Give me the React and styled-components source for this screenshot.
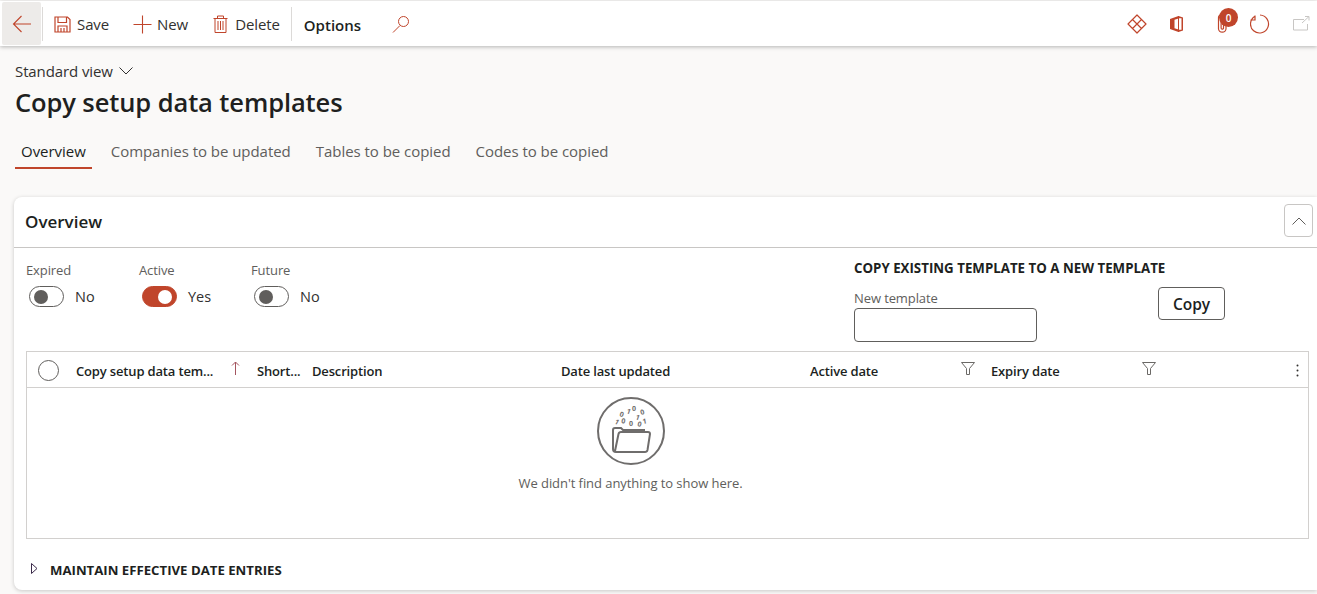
import React from 'react'
import styled, { createGlobalStyle } from 'styled-components'

const GlobalStyle = createGlobalStyle`
  html, body { margin: 0; padding: 0; background: #faf9f8; overflow: hidden; }
  body { font-family: "Open Sans", "Noto Sans", sans-serif; color: #201f1e; }
`
const RED = '#c0452b'

const Page = styled.div`
  width: 1317px;
  height: 594px;
  display: flex;
  flex-direction: column;
`
const Toolbar = styled.div`
  height: 45px;
  margin-top: 1px;
  background: #fff;
  box-shadow: 0 1px 4px rgba(0, 0, 0, 0.28);
  display: flex;
  align-items: center;
  padding-left: 2px;
  flex-shrink: 0;
`
const BackButton = styled.div`
  width: 39px;
  height: 43px;
  background: #edebe9;
  border-radius: 2px;
  display: flex;
  align-items: center;
  justify-content: center;
`
const Divider = styled.div`
  width: 1px;
  height: 34px;
  background: #dcdad8;
  margin: ${p => p.$margin};
`
const ToolButton = styled.div`
  display: flex;
  align-items: center;
  gap: ${p => p.$gap}px;
  margin-left: ${p => p.$left}px;
  font-size: 15px;
  letter-spacing: -0.1px;
  color: #323130;
  padding-top: 1px;
`
const OptionsLabel = styled.div`
  font-size: 15px;
  font-weight: 600;
  margin-left: 12px;
  padding-top: 2px;
  color: #201f1e;
`
const RightIcons = styled.div`
  margin-left: auto;
  display: flex;
  align-items: center;
  height: 100%;
`
const IconSlot = styled.div`
  position: relative;
  display: flex;
  margin-left: ${p => p.$left}px;
`
const Badge = styled.span`
  position: absolute;
  top: -5px;
  left: 3px;
  width: 19px;
  height: 19px;
  border-radius: 50%;
  background: ${RED};
  color: #fff;
  font-size: 10px;
  font-weight: 600;
  display: flex;
  align-items: center;
  justify-content: center;
`
const Header = styled.div`
  padding: 15px 0 0 15px;
`
const ViewSelect = styled.div`
  display: flex;
  align-items: center;
  gap: 6px;
  font-size: 15px;
  letter-spacing: -0.1px;
  line-height: 20px;
  color: #323130;
`
const Title = styled.h1`
  margin: 4px 0 0;
  font-size: 25.5px;
  line-height: 34px;
  font-weight: 600;
  letter-spacing: -0.1px;
  color: #201f1e;
`
const Tabs = styled.div`
  display: flex;
  margin-top: 16px;
  gap: 13px;
`
const Tab = styled.div`
  height: 34px;
  padding: 0 6px;
  display: flex;
  align-items: center;
  font-size: 15px;
  letter-spacing: -0.04px;
  color: ${p => (p.$active ? '#201f1e' : '#605e5c')};
  border-bottom: 2px solid ${p => (p.$active ? RED : 'transparent')};
  box-sizing: border-box;
`
const Card = styled.section`
  margin: 28px 0 0 14px;
  height: 393px;
  background: #fff;
  border-radius: 8px 0 0 8px;
  box-shadow: 0 1px 4px rgba(0, 0, 0, 0.2);
  display: flex;
  flex-direction: column;
`
const CardHeader = styled.div`
  height: 51px;
  box-sizing: border-box;
  border-bottom: 1px solid #c8c6c4;
  display: flex;
  align-items: center;
  justify-content: space-between;
  padding: 0 4px 0 11px;
  flex-shrink: 0;
`
const CardTitle = styled.h2`
  margin: 0 0 2px;
  font-size: 17px;
  font-weight: 600;
  color: #201f1e;
`
const CollapseButton = styled.div`
  width: 29px;
  height: 33px;
  box-sizing: border-box;
  margin-bottom: 3px;
  border: 1px solid #c8c6c4;
  border-radius: 4px;
  display: flex;
  align-items: center;
  justify-content: center;
`
const FormRow = styled.div`
  height: 103px;
  flex-shrink: 0;
  padding-left: 12px;
  display: flex;
`
const ToggleGroup = styled.div`
  width: 828px;
  display: flex;
  flex-shrink: 0;
  padding-top: 13px;
  box-sizing: border-box;
`
const ToggleField = styled.div`
  width: ${p => p.$width}px;
`
const FieldLabel = styled.div`
  font-size: 13px;
  letter-spacing: -0.1px;
  line-height: 18px;
  color: #605e5c;
`
const ToggleLine = styled.div`
  display: flex;
  align-items: center;
  gap: 11px;
  margin: 7px 0 0 3px;
  font-size: 14.5px;
  color: #323130;
`
const ToggleTrack = styled.div`
  width: 35px;
  height: 21px;
  box-sizing: border-box;
  border-radius: 11px;
  border: 1px solid ${p => (p.$on ? RED : '#605e5c')};
  background: ${p => (p.$on ? RED : '#fff')};
  display: flex;
  align-items: center;
  justify-content: ${p => (p.$on ? 'flex-end' : 'flex-start')};
  padding: 0 4px;
`
const ToggleThumb = styled.div`
  width: 14px;
  height: 14px;
  border-radius: 50%;
  background: ${p => (p.$on ? '#fff' : '#605e5c')};
`
const CopySection = styled.div`
  padding-top: 11px;
`
const CopyHeading = styled.div`
  font-size: 13.3px;
  font-weight: 700;
  line-height: 18px;
  color: #201f1e;
`
const CopyFields = styled.div`
  display: flex;
  align-items: flex-start;
  margin-top: 12px;
`
const TextInput = styled.div`
  width: 183px;
  height: 34px;
  box-sizing: border-box;
  margin-top: 1px;
  border: 1px solid #605e5c;
  border-radius: 4px;
`
const CopyButton = styled.div`
  width: 67px;
  height: 33px;
  box-sizing: border-box;
  margin: -2px 0 0 121px;
  padding-top: 1px;
  border: 1px solid #605e5c;
  border-radius: 4px;
  display: flex;
  align-items: center;
  justify-content: center;
  font-size: 15.5px;
  font-weight: 600;
`
const Grid = styled.div`
  margin: 0 8px 0 12px;
  height: 188px;
  flex-shrink: 0;
  box-sizing: border-box;
  border: 1px solid #d2d0ce;
  display: flex;
  flex-direction: column;
`
const GridHead = styled.div`
  height: 36px;
  flex-shrink: 0;
  box-sizing: border-box;
  padding-top: 2px;
  border-bottom: 1px solid #d2d0ce;
  display: grid;
  grid-template-columns: 49px 181px 55px 249px 249px 181px 181px 1fr;
  align-items: center;
`
const SelectCircle = styled.div`
  width: 21px;
  height: 21px;
  box-sizing: border-box;
  margin: -1px 0 0 11px;
  border: 1px solid #605e5c;
  border-radius: 50%;
`
const HeadCell = styled.div`
  display: flex;
  align-items: center;
  justify-content: space-between;
  padding-right: ${p => p.$pad || 0}px;
  font-size: 13px;
  font-weight: 600;
  letter-spacing: -0.16px;
  white-space: nowrap;
  color: #201f1e;
`
const MoreCell = styled.div`
  display: flex;
  justify-content: flex-end;
  padding-right: 9px;
`
const HeadIcon = styled.span`
  display: flex;
  margin-top: -5px;
`
const EmptyState = styled.div`
  flex: 1;
  display: flex;
  flex-direction: column;
  align-items: center;
  padding: 9px 74px 0 0;
`
const EmptyText = styled.div`
  margin-top: 9px;
  font-size: 13px;
  letter-spacing: -0.06px;
  line-height: 18px;
  color: #605e5c;
`
const MaintainRow = styled.div`
  display: flex;
  align-items: center;
  gap: 12px;
  margin: 22px 0 0 17px;
  font-size: 13.2px;
  font-weight: 700;
  line-height: 18px;
  color: #201f1e;
`
const CaretWrap = styled.span`
  display: flex;
  margin-top: -3px;
`

const Stroke = ({ size = 20, w, h, color = RED, children }) => (
  <svg width={w || size} height={h || size} viewBox={`0 0 ${w || size} ${h || size}`} fill="none" stroke={color} strokeWidth="1">
    {children}
  </svg>
)

const BackIcon = () => (
  <Stroke size={20}><path d="M1.5 10H19M9.5 2L1.5 10l8 8" strokeWidth="1.1" /></Stroke>
)
const SaveIcon = () => (
  <Stroke size={17}><path d="M1 1h12.5L16 3.5V16H1zM4 1v5.5h8.5V1M4 16v-6h9v6M7 12v4h3v-4" strokeWidth="1.2" /></Stroke>
)
const PlusIcon = () => (
  <Stroke size={19}><path d="M9.5 0.5v18M0.5 9.5h18" strokeWidth="1.1" /></Stroke>
)
const TrashIcon = () => (
  <Stroke w={15} h={18}><path d="M0.5 3.5h14M4.5 3.5V1h6v2.5M2 3.5v14h11v-14M5 6v9M7.5 6v9M10 6v9" /></Stroke>
)
const SearchIcon = () => (
  <Stroke size={18}><circle cx="11.5" cy="6.5" r="5" /><path d="M8 10.5L1 17.5" /></Stroke>
)
const DiamondIcon = () => (
  <Stroke size={20}>
    <path d="M10 1L19 10 10 19 1 10zM5.500 5.500L14.500 14.500M14.500 5.500L5.500 14.500" strokeLinejoin="round" strokeWidth="1.2" />
  </Stroke>
)
const OfficeIcon = () => (
  <svg width="15" height="18" viewBox="0 0 15 18">
    <path d="M1 4L9.5 1l4.5 1.500v13L9.5 17 1 14z" fill={RED} />
    <path d="M9.500 3.500L5.500 4.800v8.400l4 1.300zM9.500 3.200h3v11.600h-3z" fill="#fff" />
    <path d="M9.500 1v16" stroke={RED} strokeWidth="1" />
  </svg>
)
const ClipIcon = () => (
  <Stroke w={12} h={21}><path d="M10 5v11a3.800 3.800 0 0 1-7.500 0V4.500a2.500 2.500 0 0 1 5 0V15a1.200 1.200 0 0 1-2.400 0V6" strokeWidth="1.2" /></Stroke>
)
const RefreshIcon = () => (
  <Stroke size={20}><path d="M5 2.200a9 9 0 1 0 5-1.200M5 1.500v4.500h-4.500" strokeWidth="1.2" /></Stroke>
)
const OpenIcon = () => (
  <Stroke w={17} h={15} color="#c8c6c4"><path d="M11 3.500H0.500v10.500h14V8M9 7l7-6.500M12 0.500h4v4" /></Stroke>
)
const ChevronDown = () => (
  <Stroke w={14} h={8} color="#323130"><path d="M0.500 0.500L7 7l6.500-6.500" /></Stroke>
)
const ChevronUp = () => (
  <Stroke w={14} h={8} color="#605e5c"><path d="M0.500 7.500L7 1l6.500 6.500" /></Stroke>
)
const SortUp = () => (
  <Stroke w={9} h={14} color="#a4555f"><path d="M4.500 14V1M1 4.500L4.500 1 8 4.500" /></Stroke>
)
const FilterIcon = () => (
  <Stroke w={14} h={13} color="#6b6966"><path d="M0.500 0.500h13L8.500 6.500V12.500h-3V6.500z" /></Stroke>
)
const MoreIcon = () => (
  <svg width="3" height="13" viewBox="0 0 3 13" fill="#323130">
    <circle cx="1.500" cy="1.500" r="1" /><circle cx="1.500" cy="6.500" r="1" /><circle cx="1.500" cy="11.500" r="1" />
  </svg>
)
const CaretIcon = () => (
  <svg width="7" height="11" viewBox="0 0 7 11" fill="none" stroke="#3b2a4a" strokeWidth="1"><path d="M0.500 0.500L6 5.500 0.500 10.500z" /></svg>
)

const digits = [
  ['0', 22, 19, 20], ['1', 29, 16, 20], ['0', 35, 14, 0], ['0', 44, 18, -15],
  ['1', 17, 26, 30], ['0', 24, 26, 10], ['1', 38, 22, 20], ['1', 46, 27, -10],
  ['0', 32, 29, 0], ['0', 40, 29, 15],
]
const EmptyIcon = () => (
  <svg width="68" height="68" viewBox="0 0 68 68" fill="none" stroke="#6f6d6c">
    <circle cx="34" cy="34" r="33" strokeWidth="2" />
    <path d="M16 33v19q0 3 3 3h29q2 0 2.500-2l2.500-16q0-2-2-2H24q-2 0-2.500 2L18 54" strokeWidth="2" />
    <path d="M16 33q0-2 2-2h6l2 2h21v2" strokeWidth="2" />
    <g fill="#6f6d6c" stroke="none" fontFamily="Open Sans, sans-serif" fontSize="7" fontWeight="700">
      {digits.map(([d, x, y, r], i) => (
        <text key={i} x={x} y={y} transform={`rotate(${r} ${x} ${y})`}>{d}</text>
      ))}
    </g>
  </svg>
)

const Toggle = ({ label, value, on, width }) => (
  <ToggleField $width={width}>
    <FieldLabel>{label}</FieldLabel>
    <ToggleLine>
      <ToggleTrack $on={on}><ToggleThumb $on={on} /></ToggleTrack>
      {value}
    </ToggleLine>
  </ToggleField>
)

export default function App() {
  return (
    <Page>
      <GlobalStyle />
      <Toolbar>
        <BackButton><BackIcon /></BackButton>
        <Divider $margin="0 0 0 1px" />
        <ToolButton $left={11} $gap={6}><SaveIcon />Save</ToolButton>
        <ToolButton $left={24} $gap={5}><PlusIcon />New</ToolButton>
        <ToolButton $left={25} $gap={7}><TrashIcon />Delete</ToolButton>
        <Divider $margin="0 0 0 11px" />
        <OptionsLabel>Options</OptionsLabel>
        <IconSlot $left={31}><SearchIcon /></IconSlot>
        <RightIcons>
          <IconSlot $left={0}><DiamondIcon /></IconSlot>
          <IconSlot $left={22}><OfficeIcon /></IconSlot>
          <IconSlot $left={32}><ClipIcon /><Badge>0</Badge></IconSlot>
          <IconSlot $left={22}><RefreshIcon /></IconSlot>
          <IconSlot $left={23}><OpenIcon /></IconSlot>
          <IconSlot $left={7} />
        </RightIcons>
      </Toolbar>
      <Header>
        <ViewSelect>Standard view <ChevronDown /></ViewSelect>
        <Title>Copy setup data templates</Title>
        <Tabs>
          <Tab $active>Overview</Tab>
          <Tab>Companies to be updated</Tab>
          <Tab>Tables to be copied</Tab>
          <Tab>Codes to be copied</Tab>
        </Tabs>
      </Header>
      <Card>
        <CardHeader>
          <CardTitle>Overview</CardTitle>
          <CollapseButton><ChevronUp /></CollapseButton>
        </CardHeader>
        <FormRow>
          <ToggleGroup>
            <Toggle label="Expired" value="No" width={113} />
            <Toggle label="Active" value="Yes" on width={112} />
            <Toggle label="Future" value="No" width={112} />
          </ToggleGroup>
          <CopySection>
            <CopyHeading>COPY EXISTING TEMPLATE TO A NEW TEMPLATE</CopyHeading>
            <CopyFields>
              <div>
                <FieldLabel>New template</FieldLabel>
                <TextInput />
              </div>
              <CopyButton>Copy</CopyButton>
            </CopyFields>
          </CopySection>
        </FormRow>
        <Grid>
          <GridHead>
            <SelectCircle />
            <HeadCell $pad={17}>Copy setup data tem...<HeadIcon><SortUp /></HeadIcon></HeadCell>
            <HeadCell>Short...</HeadCell>
            <HeadCell>Description</HeadCell>
            <HeadCell>Date last updated</HeadCell>
            <HeadCell $pad={16}>Active date<HeadIcon><FilterIcon /></HeadIcon></HeadCell>
            <HeadCell $pad={16}>Expiry date<HeadIcon><FilterIcon /></HeadIcon></HeadCell>
            <MoreCell><MoreIcon /></MoreCell>
          </GridHead>
          <EmptyState>
            <EmptyIcon />
            <EmptyText>We didn't find anything to show here.</EmptyText>
          </EmptyState>
        </Grid>
        <MaintainRow><CaretWrap><CaretIcon /></CaretWrap>MAINTAIN EFFECTIVE DATE ENTRIES</MaintainRow>
      </Card>
    </Page>
  )
}
